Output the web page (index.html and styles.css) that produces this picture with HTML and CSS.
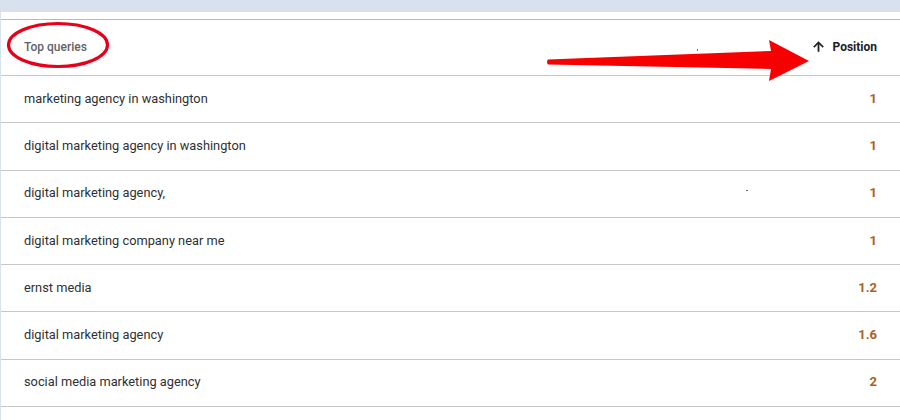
FILE: index.html
```html
<!DOCTYPE html>
<html>
<head>
<meta charset="utf-8">
<link rel="stylesheet" href="styles.css">
</head>
<body>
<div class="page">
  <div class="card">
    <div class="table">
      <div class="row head">
        <span class="q-head">Top queries</span>
        <span class="tick tick-head"></span>
        <span class="p-head">
          <svg class="up" viewBox="0 0 24 24" width="15" height="15"><path d="M4 12l1.41 1.41L11 7.83V20h2V7.83l5.58 5.59L20 12l-8-8-8 8z" fill="#202124" stroke="#202124" stroke-width="0.8"/></svg>
          Position
        </span>
      </div>
      <div class="row"><span class="q">marketing agency in washington</span><span class="v">1</span></div>
      <div class="row"><span class="q">digital marketing agency in washington</span><span class="v">1</span></div>
      <div class="row"><span class="q">digital marketing agency,</span><span class="tick tick-row"></span><span class="v">1</span></div>
      <div class="row"><span class="q">digital marketing company near me</span><span class="v">1</span></div>
      <div class="row"><span class="q">ernst media</span><span class="v">1.2</span></div>
      <div class="row"><span class="q">digital marketing agency</span><span class="v">1.6</span></div>
      <div class="row"><span class="q">social media marketing agency</span><span class="v">2</span></div>
    </div>
    <svg class="ellipse" width="110" height="50" viewBox="0 0 110 50">
      <ellipse cx="55" cy="25" rx="49.5" ry="21.5" fill="none" stroke="#e8001a" stroke-width="3.2"/>
    </svg>
    <svg class="arrow" width="280" height="50" viewBox="0 0 280 50">
      <path d="M3 22.5 Q1 25 3 27.5 L226 32 L224 44 L264 24 L224 3 L226 14 Z" fill="#f70000"/>
    </svg>
  </div>
</div>
</body>
</html>
```
FILE: styles.css
```css
html, body {
  margin: 0;
  padding: 0;
}
body {
  background: #d7e2ee;
  font-family: Roboto, "Noto Sans", Arial, sans-serif;
  width: 900px;
  height: 420px;
  overflow: hidden;
}
.page {
  padding-top: 12px;
  padding-left: 1px;
}
.card {
  position: relative;
  background: #fff;
  padding-top: 7px;
  height: 401px;
}
.table {
  border-top: 1px solid #b9b9b9;
}
.row {
  box-sizing: border-box;
  height: 47.3px;
  border-bottom: 1px solid #c6c6c6;
  display: flex;
  align-items: center;
  justify-content: space-between;
  padding: 0 23px 2px 23px;
  position: relative;
}
.row.head {
  height: 56px;
  padding-bottom: 2px;
}
.q-head {
  font-size: 12px;
  font-weight: 500;
  color: #5f6368;
}
.p-head {
  display: flex;
  align-items: center;
  gap: 6px;
  font-size: 12px;
  font-weight: 700;
  color: #202124;
}
.up {
  display: block;
}
.q {
  font-size: 12.8px;
  color: #303134;
}
.v {
  font-size: 13px;
  font-weight: 700;
  color: #a8621f;
}
.tick {
  position: absolute;
  width: 1px;
  height: 2px;
  background: #6b6f75;
}
.tick-head {
  left: 696px;
  top: 29px;
}
.tick-row {
  left: 745px;
  top: 19px;
  width: 2px;
  height: 1px;
}
.ellipse {
  position: absolute;
  left: 2px;
  top: 8px;
}
.arrow {
  position: absolute;
  left: 544px;
  top: 25px;
}
```
